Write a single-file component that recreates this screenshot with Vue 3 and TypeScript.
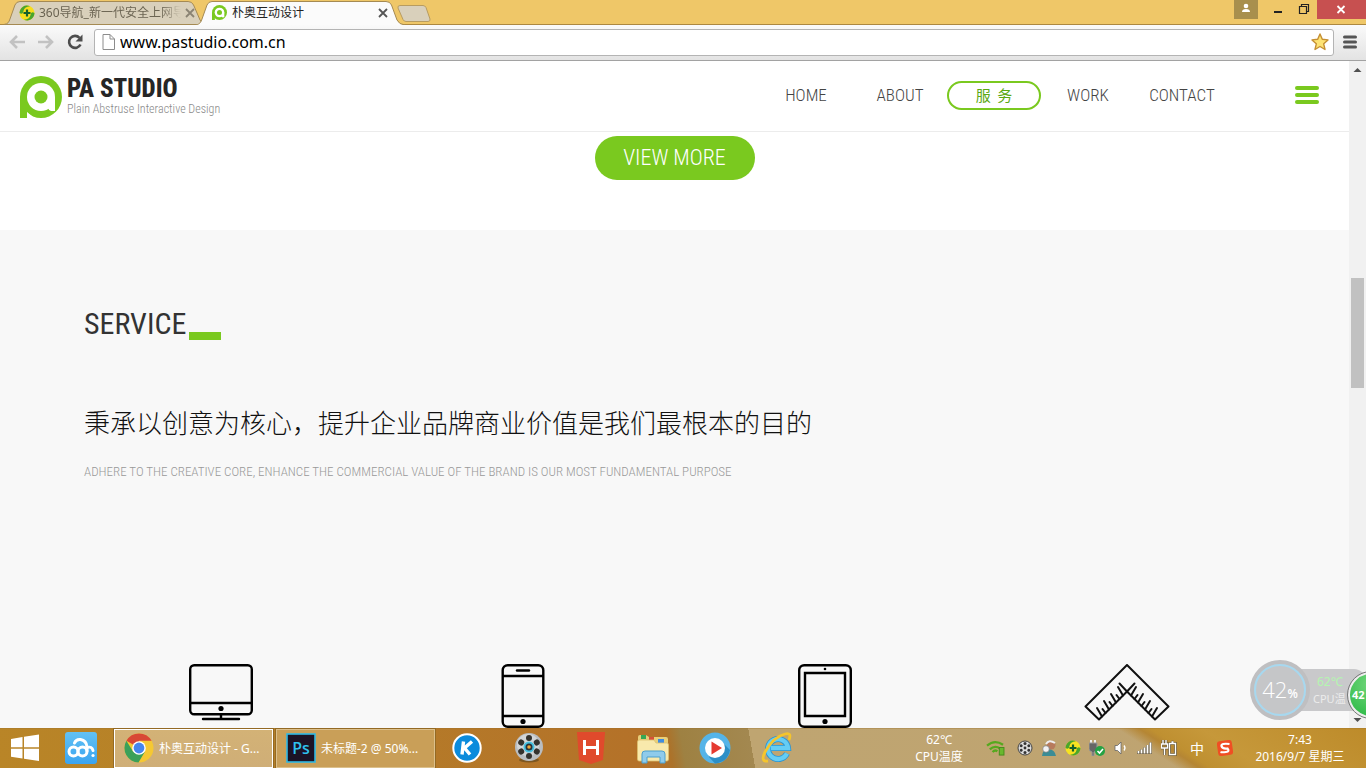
<script setup lang="ts">
import { ref } from 'vue'

interface NavItem { label: string; active?: boolean }
const nav: NavItem[] = [
  { label: 'HOME' },
  { label: 'ABOUT' },
  { label: '服\u00a0\u00a0务', active: true },
  { label: 'WORK' },
  { label: 'CONTACT' },
]
const address = ref('www.pastudio.com.cn')
const ticks = [0, 1, 2, 3, 4, 5, 6]
const holes = [0, 60, 120, 180, 240, 300]
</script>

<template>
  <div class="screen">
    <header class="tabstrip">
      <div class="tab tab-back">
        <svg class="tab-shape" viewBox="0 0 204 25" preserveAspectRatio="none">
          <path d="M0 24.500C4 24 5 22 6 19L11 5Q12.500 1.500 16 1.500H185Q189 1.500 190.500 5L197 20Q199 24.500 203 24.500Z" fill="#d9d0bb" stroke="#a58a52" />
        </svg>
        <svg class="fav" viewBox="0 0 16 16">
          <circle cx="8" cy="8" r="7.500" fill="#f7dd1c" />
          <path d="M.5 8A7.500 7.500 0 0 1 11 1.200Q5 2 4.500 6T.5 8M15.500 8A7.500 7.500 0 0 1 5 14.800Q11 14 11.500 10T15.500 8" fill="#4aa52c" />
          <path d="M8 4.500v7M4.500 8h7" stroke="#14602b" stroke-width="2.200" />
        </svg>
        <span class="tab-title fade">360导航_新一代安全上网导</span>
        <button class="tab-close" aria-label="关闭标签页"><svg viewBox="0 0 10 10"><path d="M1 1l8 8M9 1L1 9" stroke="#8a8373" stroke-width="1.800" /></svg></button>
      </div>
      <div class="tab tab-front">
        <svg class="tab-shape" viewBox="0 0 210 25" preserveAspectRatio="none">
          <path d="M0 25C4 24 5 22 6 19L11 5Q12.500 1.500 16 1.500H190Q194 1.500 195.500 5L201 20Q203 24.500 209 25" fill="#fbfbfb" stroke="#a58a52" />
        </svg>
        <svg class="fav" viewBox="0 0 42 42"><path d="M0 42V21H8V42Z" fill="#7ac91f" /><circle cx="21" cy="21" r="21" fill="#7ac91f" /><circle cx="21" cy="21" r="13.500" fill="#fff" /><path d="M28 21H34.500V34.500H28Z" fill="#fff" /><circle cx="21" cy="21" r="7" fill="#7ac91f" /></svg>
        <span class="tab-title">朴奥互动设计</span>
        <button class="tab-close" aria-label="关闭标签页"><svg viewBox="0 0 10 10"><path d="M1 1l8 8M9 1L1 9" stroke="#555" stroke-width="1.800" /></svg></button>
      </div>
      <button class="new-tab" aria-label="打开新的标签页">
        <svg viewBox="0 0 34 17"><path d="M3 .5H26Q28 .5 29 2.500L33 14Q33.500 16.500 31 16.500H9Q7 16.500 6 14.500L1 3Q.5 .5 3 .5Z" fill="#d9d0bb" stroke="#b89c60" /></svg>
      </button>
      <div class="win">
        <button class="win-user" aria-label="用户"><svg viewBox="0 0 24 19"><circle cx="12" cy="6" r="2.300" fill="#fff" /><path d="M8 12Q8 9 12 9T16 12Z" fill="#fff" /></svg></button>
        <button class="win-btn" aria-label="最小化"><svg viewBox="0 0 26 19"><path d="M9 12H17" stroke="#222" stroke-width="2" /></svg></button>
        <button class="win-btn" aria-label="还原"><svg viewBox="0 0 26 19"><path d="M8.500 6.500h7v7h-7z M10.500 6V4.500H17.500V11.500H16" fill="none" stroke="#222" stroke-width="1.200" /></svg></button>
        <button class="win-close" aria-label="关闭"><svg viewBox="0 0 45 19"><path d="M18.500 6l7 7M25.500 6l-7 7" stroke="#fff" stroke-width="1.800" /></svg></button>
      </div>
    </header>

    <div class="toolbar">
      <button class="tool" aria-label="后退"><svg viewBox="0 0 18 18"><path d="M17 9H4M9 3L3 9l6 6" fill="none" stroke="#c2c2c2" stroke-width="2.600" /></svg></button>
      <button class="tool" aria-label="前进"><svg viewBox="0 0 18 18"><path d="M1 9H14M9 3l6 6-6 6" fill="none" stroke="#c2c2c2" stroke-width="2.600" /></svg></button>
      <button class="tool" aria-label="重新加载"><svg viewBox="0 0 18 18"><path d="M14.500 11.500A6 6 0 1 1 13.500 4.800" fill="none" stroke="#4d4d4d" stroke-width="2.600" /><path d="M16.500 1.500V8.500H9.500Z" fill="#4d4d4d" /></svg></button>
      <div class="omnibox">
        <svg class="doc" viewBox="0 0 13 16"><path d="M1 .5H8L12.500 5V15.500H1ZM8 .5V5H12.500" fill="#fff" stroke="#8c8c8c" /></svg>
        <input v-model="address" aria-label="地址栏" />
        <button class="star" aria-label="收藏"><svg viewBox="0 0 18 18"><path d="M9 1l2.300 5.300 5.700.6-4.300 3.900 1.300 5.700L9 13.500 4 16.500l1.300-5.700L1 6.900l5.700-.6Z" fill="#fde374" stroke="#c58f33" stroke-width="1.400" stroke-linejoin="round" /></svg></button>
      </div>
      <button class="menu" aria-label="菜单"><svg viewBox="0 0 14 14"><path d="M1.500 2H12.500M1.500 7H12.500M1.500 12H12.500" stroke="#555" stroke-width="3" stroke-linecap="round" /></svg></button>
    </div>

    <div class="viewport">
      <main class="site">
        <div class="site-head">
          <a class="brand" href="#">
            <svg class="logo" viewBox="0 0 42 42"><path d="M0 42V21H7V42Z" fill="#7ac91f" /><circle cx="21" cy="21" r="21" fill="#7ac91f" /><path d="M7 42V36L13 41V42Z" fill="#fff" /><circle cx="21" cy="21" r="14" fill="#fff" /><path d="M28 21H35V35H31Q29 35 28 32Z" fill="#fff" /><circle cx="21" cy="21" r="6.500" fill="#7ac91f" /></svg>
            <span class="brand-text"><strong>PA STUDIO</strong><small>Plain Abstruse Interactive Design</small></span>
          </a>
          <nav>
            <a v-for="n in nav" :key="n.label" href="#" :class="{ active: n.active }">{{ n.label }}</a>
          </nav>
          <button class="burger" aria-label="菜单"><i></i><i></i><i></i></button>
        </div>
        <div class="more"><a href="#">VIEW MORE</a></div>
        <section class="service">
          <div class="intro">
            <h2>SERVICE<span class="dash"></span></h2>
            <p class="lead">秉承以创意为核心，提升企业品牌商业价值是我们最根本的目的</p>
            <p class="sub">ADHERE TO THE CREATIVE CORE, ENHANCE THE COMMERCIAL VALUE OF THE BRAND IS OUR MOST FUNDAMENTAL PURPOSE</p>
          </div>
          <div class="devices">
            <svg viewBox="0 0 86 64" fill="none" stroke="#000" stroke-width="2.400"><rect x="12.200" y="1.200" width="61.600" height="49" rx="4" /><path d="M12 39H74M43 50V55" /><path d="M25 55H61" stroke-linecap="round" /><circle cx="43" cy="44.500" r="2.600" fill="#000" stroke="none" /></svg>
            <svg viewBox="0 0 86 64" fill="none" stroke="#000" stroke-width="2.400"><rect x="22.700" y="1.200" width="40.600" height="61.600" rx="5" /><path d="M22 12H64M22 52H64" /><path d="M37 6.500H49" stroke-linecap="round" /><circle cx="43" cy="57.500" r="2.600" fill="#000" stroke="none" /></svg>
            <svg viewBox="0 0 86 64" fill="none" stroke="#000" stroke-width="2.400"><rect x="17.200" y="1.200" width="51.600" height="61.600" rx="5" /><path d="M23 9H63V52H23Z" /><circle cx="43" cy="5" r="1.300" fill="#000" stroke="none" /><circle cx="43" cy="57.500" r="2.600" fill="#000" stroke="none" /></svg>
            <svg viewBox="0 0 86 64" fill="none" stroke="#111" stroke-width="2" stroke-linejoin="round" stroke-linecap="round">
              <path d="M43 1L84.500 42.500L71 55.500L43 27.500L15 55.500L1.500 42.500Z" />
              <path d="M43 27.500l-7.500 -8M43 27.500l7.500 -8" />
              <path v-for="t in ticks" :key="'l' + t" :d="t % 2 ? 'M0 0l-3 -4' : 'M0 0l-5 -8.5'" :transform="`translate(${18 + t * 3.5} ${52.5 - t * 3.5})`" />
              <path v-for="t in ticks" :key="'r' + t" :d="t % 2 ? 'M0 0l3 -4' : 'M0 0l5 -8.5'" :transform="`translate(${68 - t * 3.5} ${52.5 - t * 3.5})`" />
            </svg>
          </div>
        </section>
      </main>
      <div class="scrollbar">
        <svg viewBox="0 0 17 17"><path d="M4.500 11L8.500 7l4 4Z" fill="#505050" /></svg>
        <div class="track"><div class="before"></div><div class="thumb"></div><div class="after"></div></div>
        <svg viewBox="0 0 17 17"><path d="M4.500 7L8.500 11l4-4Z" fill="#505050" /></svg>
      </div>
      <aside class="monitor">
        <div class="gauge"><span>42<small>%</small></span></div>
        <div class="temps"><b>62℃</b><span>CPU温</span></div>
        <div class="ball">42</div>
      </aside>
    </div>

    <footer class="taskbar">
      <button class="start" aria-label="开始"><svg viewBox="0 0 28 28"><path d="M0 5L11.500 3V13.300H0ZM13 2.700L28 .5V13.300H13ZM0 14.700H11.500V24.500L0 22.700ZM13 14.700H28V27L13 24.800Z" fill="#fff" /></svg></button>
      <button class="cloud" aria-label="百度云">
        <svg viewBox="0 0 32 32"><defs><linearGradient id="sky" x2="0" y2="1"><stop stop-color="#62c1f4" /><stop offset="1" stop-color="#3aa4f0" /></linearGradient></defs><rect width="32" height="32" rx="3" fill="url(#sky)" /><g fill="none" stroke="#fff" stroke-width="3" stroke-linecap="round"><circle cx="8.500" cy="19.500" r="4.500" /><circle cx="17.500" cy="19.500" r="4.500" /><path d="M9.500 11Q11 7 15.500 7.500Q21.500 8.500 22 15V19" /><path d="M22 15.500Q27 14 28 18.500" /></g><circle cx="28" cy="23.500" r="1.600" fill="#fff" /></svg>
      </button>
      <button class="task current">
        <svg viewBox="0 0 30 30"><circle cx="15" cy="15" r="14.500" fill="#f5c833" /><path d="M15 15L2.400 7.700A14.500 14.500 0 0 1 27.600 7.700H15Z" fill="#d84836" /><path d="M2.400 7.700A14.500 14.500 0 0 0 14.500 29.500L21 18.500L9 18.500Z" fill="#3ba05a" /><circle cx="15" cy="15" r="6.800" fill="#fff" /><circle cx="15" cy="15" r="5.400" fill="#4586ee" /></svg>
        <span>朴奥互动设计 - G...</span>
      </button>
      <button class="task">
        <svg viewBox="0 0 30 30"><rect x="1" y="1" width="28" height="28" fill="#1c1325" stroke="#2fb9e4" stroke-width="1.600" /><text x="15" y="20.500" text-anchor="middle" font-size="16" font-weight="600" fill="#2fc2ee" font-family="'Open Sans',sans-serif">Ps</text></svg>
        <span>未标题-2 @ 50%...</span>
      </button>
      <div class="pins">
        <button aria-label="酷狗音乐"><svg viewBox="0 0 32 32"><circle cx="16" cy="16" r="13.700" fill="#0b8bdc" stroke="#fff" stroke-width="2" /><path d="M12.500 9.500L11 22.500M21 9.500L13.500 16L19 22.500" fill="none" stroke="#fff" stroke-width="3.400" /></svg></button>
        <button aria-label="影音"><svg viewBox="0 0 32 32"><ellipse cx="16" cy="28" rx="10" ry="2.500" fill="#7d5720" /><circle cx="16" cy="15" r="14" fill="#b9bdc1" /><circle cx="15" cy="13" r="11" fill="#d2d5d7" /><g v-for="h in holes" :key="h" :transform="`rotate(${h} 16 15)`"><circle cx="16" cy="6" r="3" fill="#34322e" /></g><circle cx="16" cy="15" r="4.500" fill="#29323a" stroke="#43bfdf" stroke-width="2" /><circle cx="16" cy="15" r="1.800" fill="#f0a638" /></svg></button>
        <button aria-label="HBuilder"><svg viewBox="0 0 32 32"><path d="M2 0H30L28 28L16 32L4 28Z" fill="#e04a2c" /><path d="M9.500 8V23M22.500 8V23M9.500 15.500H22.500" stroke="#fff" stroke-width="3" /></svg></button>
        <button aria-label="文件资源管理器"><svg viewBox="0 0 32 32"><path d="M1 5Q1 3 3 3H9L12 5H29Q31 5 31 7V28H1Z" fill="#e8cf79" /><path d="M4 3H9V7H4Z" fill="#36a854" /><path d="M12 5H17V9H12Z" fill="#d74f3a" /><path d="M21 7H27V11H21Z" fill="#3f8de0" /><path d="M.5 10Q.5 8 2 8H17L19 11H30Q31.500 11 31.500 13V27Q31.500 29 30 29H2Q.5 29 .5 27Z" fill="#f8e9ac" stroke="#dcc070" stroke-width=".8" /><path d="M5 31V22Q5 19 8 19H25Q28 19 28 22V31H23V25H10V31Z" fill="#8fcbeb" stroke="#4a9fce" /></svg></button>
        <button aria-label="播放器"><svg viewBox="0 0 32 32"><circle cx="16" cy="16" r="15.500" fill="#55b4e8" /><path d="M24 11L31 18Q29 30 16 31.500L10 25Z" fill="#2c8fc7" /><circle cx="16" cy="16" r="10" fill="#fff" /><path d="M12.500 9.500L23 16L12.500 22.500Z" fill="#e53a30" /></svg></button>
        <button aria-label="Internet Explorer"><svg viewBox="0 0 32 32"><path d="M26 21.500A10 10 0 1 1 27 16H10" fill="none" stroke="#2794d4" stroke-width="6" /><path d="M26 21.500A10 10 0 1 1 27 16H10" fill="none" stroke="#65cdf4" stroke-width="4.400" /><path d="M7 29Q-1 30 4 20Q12 5 24 2Q31 0 28 8" fill="none" stroke="#f5c52c" stroke-width="2.800" /></svg></button>
      </div>
      <div class="cpu"><span>62℃</span><span>CPU温度</span></div>
      <div class="tray">
        <svg class="wide" viewBox="0 0 20 17"><g fill="none" stroke="#55a91e" stroke-width="2.400"><path d="M1 6Q9-1 18 5M4 10Q9 5 15 9M7 13Q9 10 12 12" /></g><rect x="14" y="8" width="5" height="8" fill="#69b82e" stroke="#468a1c" /></svg>
        <svg viewBox="0 0 16 16"><circle cx="8" cy="8" r="7" fill="#ddd" stroke="#444" /><g v-for="h in holes" :key="h" :transform="`rotate(${h} 8 8)`"><circle cx="8" cy="3.600" r="1.500" fill="#333" /></g><circle cx="8" cy="8" r="1.400" fill="#333" /></svg>
        <svg viewBox="0 0 16 16"><path d="M1 16Q2 8 8 9T15 16Z" fill="#3b8c95" /><circle cx="10" cy="5" r="4.500" fill="#b77b5d" /><path d="M5 4Q8-1 14 3" stroke="#eee" stroke-width="2" fill="none" /><circle cx="5" cy="9" r="3.300" fill="#f3f3f3" stroke="#777" stroke-width=".7" /></svg>
        <svg viewBox="0 0 16 16"><circle cx="8" cy="8" r="7.500" fill="#f7e320" /><path d="M.5 8A7.500 7.500 0 0 1 11 1.200Q5 2 4.500 6T.5 8M15.500 8A7.500 7.500 0 0 1 5 14.800Q11 14 11.500 10T15.500 8" fill="#4aa52c" /><path d="M8 4.500v7M4.500 8h7" stroke="#14602b" stroke-width="2.200" /></svg>
        <svg viewBox="0 0 16 16"><path d="M2 0V4M6 0V4" stroke="#eee" stroke-width="2" /><path d="M0 3H8V9Q8 12 5 12V16H3V12Q0 11 0 9Z" fill="#666" stroke="#999" /><circle cx="11" cy="11" r="5" fill="#25a244" /><path d="M8.500 11l2 2 3.500-4" fill="none" stroke="#fff" stroke-width="1.600" /></svg>
        <svg viewBox="0 0 16 16"><path d="M2 5.500H4.500L8 2V14L4.500 10.500H2Z" fill="#fff" stroke="#666" stroke-width=".8" /><path d="M11 5.500Q13 8 11 10.500" fill="none" stroke="#fff" stroke-width="1.300" /></svg>
        <svg viewBox="0 0 16 16"><path d="M1.500 14V11M4.500 14V9.500M7.500 14V7.500M10.500 14V5M13.500 14V2.500" stroke="#54492f" stroke-width="2.800" /><path d="M1.500 13.500V11M4.500 13.500V9.500M7.500 13.500V7.500M10.500 13.500V5M13.500 13.500V2.500" stroke="#fff" stroke-width="1.800" /></svg>
        <svg viewBox="0 0 16 16" fill="none"><path d="M2 0V4M5 0V4M0.500 4H6.500V8H.5ZM3.500 8V15M8.500 3.500H14.500V14.500H8.500ZM10.500 2H12.500" stroke="#54492f" stroke-width="2.600" /><path d="M2 0V4M5 0V4M0.500 4H6.500V8H.5ZM3.500 8V15M8.500 3.500H14.500V14.500H8.500ZM10.500 2H12.500" stroke="#fff" stroke-width="1.400" /></svg>
        <span class="ime">中</span>
        <svg viewBox="0 0 16 16"><rect width="15" height="15" x=".5" y=".5" rx="3" fill="#f04e23" transform="rotate(-8 8 8)" /><path d="M12.500 4Q4 3 4.500 6T10.500 8.500Q13 11.500 9 12T3.500 12" fill="none" stroke="#fff" stroke-width="2.200" /></svg>
      </div>
      <div class="clock"><span>7:43</span><span>2016/9/7 星期三</span></div>
    </footer>
  </div>
</template>

<style>
html, body { margin: 0; height: 100%; overflow: hidden; }
</style>

<style scoped>
.screen { height: 100vh; display: flex; flex-direction: column; overflow: hidden; background: #fff; font-family: "Noto Sans", "Noto Sans CJK SC", sans-serif; --green: #7ac91f; --narrow: "Roboto Condensed", "Liberation Sans Narrow", "Liberation Sans", sans-serif; }
button { appearance: none; border: 0; padding: 0; margin: 0; background: none; font: inherit; color: inherit; }
svg { display: block; flex: none; }
a { text-decoration: none; color: inherit; }

.tabstrip { flex: none; height: 25px; display: flex; background: #efc768; box-shadow: inset 0 -1px #ad8840; padding-left: 4px; }
.tab { position: relative; display: flex; align-items: center; box-sizing: border-box; height: 25px; padding: 0 12px 0 15px; gap: 4px; }
.tab-back { width: 203px; }
.tab-front { width: 210px; margin-left: -11px; padding: 0 18px 0 16px; }
.tab-shape { position: absolute; inset: 0; width: 100%; height: 100%; }
.tab > :not(.tab-shape) { position: relative; }
.fav { width: 16px; height: 16px; }
.tab-front .fav { width: 15px; height: 15px; margin-right: 1px; }
.tab-title { flex: 1; overflow: hidden; white-space: nowrap; font-size: 12px; line-height: 18px; color: #222; }
.tab-title.fade { color: #6b6452; mask-image: linear-gradient(90deg, #000 85%, transparent); }
.tab-close { width: 10px; height: 10px; }
.tab-close svg { width: 10px; height: 10px; }
.new-tab { width: 34px; height: 17px; margin: 5px 0 0 -9px; position: relative; }
.new-tab svg { width: 34px; height: 17px; }
.win { margin-left: auto; display: flex; height: 19px; }
.win svg { height: 19px; }
.win-user { width: 24px; background: #a88f4d; margin-right: 7px; }
.win-btn { width: 26px; }
.win-close { width: 49px; background: #c75050; }
.win-close svg { margin: auto; width: 45px; }

.toolbar { flex: none; height: 36px; box-sizing: border-box; display: flex; align-items: center; gap: 11px; padding: 0 9px 1px 8px; background: linear-gradient(#fafafa, #e3e3e3); border-bottom: 1px solid #a2a2a2; }
.tool, .tool svg { width: 18px; height: 18px; }
.omnibox { flex: 1; display: flex; align-items: center; box-sizing: border-box; height: 27px; padding: 0 4px 0 7px; background: #fff; border: 1px solid #b4b4b4; border-radius: 3px; margin-right: -2px; margin-left: -1px; }
.doc { width: 13px; height: 16px; }
.omnibox input { flex: 1; border: 0; outline: 0; padding: 0 5px; background: transparent; color: #000; font: 16px/24px "Noto Sans", sans-serif; min-width: 0; }
.star, .star svg { width: 18px; height: 18px; }
.menu, .menu svg { width: 14px; height: 14px; }

.viewport { flex: 1; min-height: 0; display: flex; position: relative; }
.site { flex: 1; min-width: 0; overflow: hidden; display: flex; flex-direction: column; }
.site-head { flex: none; box-sizing: border-box; height: 71px; display: flex; align-items: center; padding: 0 30px 2px 20px; border-bottom: 1px solid #ececec; }
.brand { display: flex; gap: 5px; align-items: center; padding-top: 4px; }
.logo { width: 42px; height: 42px; }
.brand-text { display: flex; flex-direction: column; font-family: var(--narrow); }
.brand-text strong { font-size: 25px; line-height: 24px; font-weight: 800; color: #262626; }
.brand-text small { font-size: 12px; line-height: 16px; font-weight: 300; color: #888; }
nav { margin-left: auto; display: flex; margin-right: 66px; }
nav a { box-sizing: border-box; width: 94px; height: 29px; line-height: 29px; text-align: center; font-family: var(--narrow); font-size: 17px; font-weight: 300; color: #444; }
nav a.active { border: 2px solid var(--green); border-radius: 15px; line-height: 24px; font-family: "Noto Sans CJK SC", sans-serif; font-size: 15px; font-weight: 400; color: #5ba812; }
.burger { width: 24px; display: flex; flex-direction: column; gap: 3px; }
.burger i { height: 4px; border-radius: 2px; background: var(--green); }
.more { flex: none; height: 94px; padding-top: 4px; display: flex; justify-content: center; align-items: flex-start; }
.more a { width: 160px; height: 44px; line-height: 44px; border-radius: 22px; background: var(--green); color: #fff; text-align: center; font-family: var(--narrow); font-size: 22px; font-weight: 300; }
.service { flex: 1; min-height: 0; background: #f8f8f8; padding: 68px 71px 0 70px; }
.intro { padding-left: 14px; }
h2 { margin: 0; display: flex; align-items: flex-end; gap: 3px; font-family: var(--narrow); font-weight: 400; font-size: 30px; line-height: 52px; color: #333; }
.dash { width: 32px; height: 8px; margin-bottom: 10px; background: var(--green); }
.lead { margin: 52px 0 0; font-family: "Noto Sans CJK SC", sans-serif; font-weight: 300; font-size: 26px; line-height: 40px; color: #111; }
.sub { margin: 20px 0 0; font-family: var(--narrow); font-size: 13px; font-weight: 300; line-height: 20px; color: #999; }
.devices { display: grid; grid-template-columns: repeat(4, 1fr); justify-items: center; margin-top: 182px; }
.devices svg { width: 86px; height: 64px; }

.scrollbar { width: 17px; flex: none; background: #f1f1f1; display: flex; flex-direction: column; }
.scrollbar > svg { width: 17px; height: 17px; }
.track { flex: 1; display: flex; flex-direction: column; }
.before { flex: 200; }
.thumb { flex: 110; margin: 0 2px; background: #c1c1c1; }
.after { flex: 323; }

.monitor { position: absolute; right: 0; bottom: 8px; width: 116px; height: 60px; overflow: hidden; }
.gauge { position: absolute; z-index: 1; left: 0; top: 0; width: 60px; height: 60px; box-sizing: border-box; border-radius: 50%; border: 4px solid #bfbfc1; background: #c5c6c8; display: flex; }
.gauge span { flex: 1; border: 2px solid #a7d8ef; border-radius: 50%; color: #fff; font: 300 22px/46px "Open Sans", sans-serif; text-align: center; }
.gauge small { font-size: 12px; font-weight: 600; }
.temps { position: absolute; left: 30px; right: 0; top: 9px; height: 42px; padding-left: 33px; box-sizing: border-box; background: #c9c9cb; border-radius: 0 12px 12px 0; display: flex; flex-direction: column; justify-content: center; white-space: nowrap; color: #ececec; font-size: 11px; line-height: 17px; }
.temps b { padding-left: 4px; font-weight: 400; font-size: 12px; color: #b4f5b0; }
.ball { position: absolute; z-index: 1; left: 98px; top: 12px; width: 46px; height: 46px; box-sizing: border-box; padding-left: 2px; border: 2px solid #eee; outline: 1px solid #777; border-radius: 50%; background: radial-gradient(circle at 50% 25%, #72d67b, #27b742); color: #fff; font: 700 11px/42px "Open Sans", sans-serif; }

.taskbar { flex: none; height: 40px; display: flex; align-items: center; color: #fff; font-size: 12px; background: linear-gradient(213deg, #bd8b2a 0, #c6983a 90px, #bf9031 118px, #b58634 124px, transparent 136px), linear-gradient(80deg, #b98527 0, #b57f28 20%, #b47129 48%, #ac7229 49%, #9e8142 50%, #a38850 55%, #bfa571 55%, #bea371 100%); box-shadow: inset 0 1px #9c722c55; }
.start { margin-left: 11px; }
.start svg { width: 28px; height: 28px; }
.cloud { margin-left: 26px; }
.cloud svg { width: 32px; height: 32px; }
.task { box-sizing: border-box; width: 159px; height: 39px; margin-left: 3px; display: flex; align-items: center; gap: 5px; padding-left: 9px; background: #c99f58; border: 1px solid #dcc08c; white-space: nowrap; outline: 1px solid #946a24; }
.task.current { margin-left: 17px; background: linear-gradient(#d3b276, #cfae77); border-color: #fff; }
.task svg { width: 30px; height: 30px; }
.pins { margin-left: 16px; display: flex; gap: 30px; }
.pins svg { width: 32px; height: 32px; }
.cpu { margin-left: auto; width: 60px; display: flex; flex-direction: column; text-align: center; line-height: 17px; }
.tray { display: flex; align-items: center; gap: 8px; margin-left: 16px; }
.tray svg { width: 16px; height: 16px; }
.tray .wide { width: 21px; margin-right: 3px; }
.ime { font-size: 14px; width: 24px; text-align: center; }
.clock { width: 100px; margin: 0 16px 0 17px; display: flex; flex-direction: column; text-align: center; line-height: 17px; white-space: nowrap; }
</style>
